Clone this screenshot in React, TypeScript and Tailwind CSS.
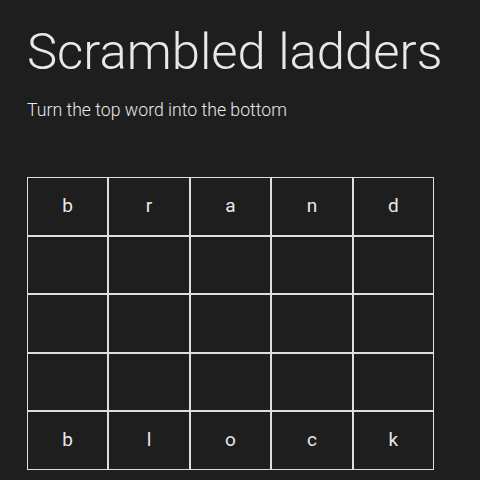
import React from "react";

const top = ["b", "r", "a", "n", "d"];
const bottom = ["b", "l", "o", "c", "k"];

export default function App() {
  const rows: string[][] = [top, ["", "", "", "", ""], ["", "", "", "", ""], ["", "", "", "", ""], bottom];
  return (
    <div className="w-[480px] h-[480px] bg-[#1e1e1e] text-[#e8e8e8] overflow-hidden pl-[27px] pt-[21px]" style={{ fontFamily: "Roboto, sans-serif" }}>
      <h1 className="text-[50.8px] font-light leading-[62px]">Scrambled ladders</h1>
      <p className="text-[17.7px] font-light mt-[16px] leading-[22px]">Turn the top word into the bottom</p>
      <div className="mt-[56px] grid grid-cols-5 w-[407px]">
        {rows.flat().map((c, i) => (
          <div key={i} className="h-[58.6px] border border-[#dedede] flex items-center justify-center text-[19px] font-normal">
            {c}
          </div>
        ))}
      </div>
    </div>
  );
}
